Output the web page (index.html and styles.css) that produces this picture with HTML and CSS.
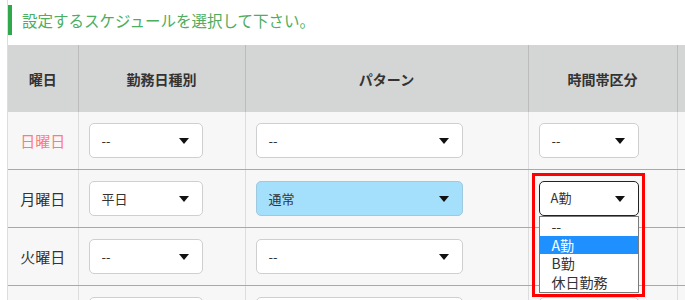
FILE: index.html
```html
<!DOCTYPE html>
<html lang="ja">
<head>
    <meta charset="UTF-8">
    <title>スケジュール設定</title>
    <link rel="stylesheet" href="styles.css">
</head>
<body>
<div class="page">
    <h2 class="title">設定するスケジュールを選択して下さい。</h2>
    <table class="schedule">
        <colgroup>
            <col class="c_day">
            <col class="c_kind">
            <col class="c_pattern">
            <col class="c_time">
            <col class="c_rest">
        </colgroup>
        <thead>
        <tr>
            <th>曜日</th>
            <th>勤務日種別</th>
            <th>パターン</th>
            <th>時間帯区分</th>
            <th></th>
        </tr>
        </thead>
        <tbody>
        <tr>
            <td class="day sunday">日曜日</td>
            <td><div class="select kind">--<span class="arrow"></span></div></td>
            <td><div class="select pattern">--<span class="arrow"></span></div></td>
            <td><div class="select time">--<span class="arrow"></span></div></td>
            <td></td>
        </tr>
        <tr>
            <td class="day">月曜日</td>
            <td><div class="select kind">平日<span class="arrow"></span></div></td>
            <td><div class="select pattern filled">通常<span class="arrow"></span></div></td>
            <td>
                <div class="picker">
                    <div class="select time open">A勤<span class="arrow"></span></div>
                    <ul class="options">
                        <li>--</li>
                        <li class="hover">A勤</li>
                        <li>B勤</li>
                        <li>休日勤務</li>
                    </ul>
                    <div class="mark"></div>
                </div>
            </td>
            <td></td>
        </tr>
        <tr>
            <td class="day">火曜日</td>
            <td><div class="select kind">--<span class="arrow"></span></div></td>
            <td><div class="select pattern">--<span class="arrow"></span></div></td>
            <td><div class="select time">--<span class="arrow"></span></div></td>
            <td></td>
        </tr>
        <tr>
            <td class="day">水曜日</td>
            <td><div class="select kind">--<span class="arrow"></span></div></td>
            <td><div class="select pattern">--<span class="arrow"></span></div></td>
            <td><div class="select time">--<span class="arrow"></span></div></td>
            <td></td>
        </tr>
        </tbody>
    </table>
</div>
</body>
</html>
```
FILE: styles.css
```css
body{
    margin: 0;
    background: #ffffff;
    font-family: "Noto Sans CJK JP", "Noto Sans", sans-serif;
    color: #333333;
    overflow: hidden;
}
.page{
    margin-left: 7px;
    border-left: 1px solid #dddddd;
    padding-top: 5px;
    height: 300px;
}
.title{
    margin: 0 0 10px 0;
    height: 30px;
    border-left: 4px solid #2ea84a;
    padding-left: 10px;
    font-size: 15.5px;
    font-weight: normal;
    line-height: 30px;
    color: #4cae5e;
}
.schedule{
    border-collapse: collapse;
    table-layout: fixed;
    width: 760px;
}
.c_day{ width: 70px; }
.c_kind{ width: 167px; }
.c_pattern{ width: 283px; }
.c_time{ width: 149px; }
.c_rest{ width: 91px; }

.schedule th{
    height: 67px;
    padding: 0;
    background: #d4d5d5;
    border-left: 1px solid #bcbcbc;
    font-size: 14px;
    font-weight: bold;
    color: #333333;
    text-align: center;
}
.schedule th:first-child{ border-left: 0; }
.schedule td{
    height: 57px;
    padding: 0 0 0 10px;
    background: #f7f7f7;
    border-left: 1px solid #dddddd;
    border-bottom: 1px solid #a9a9a9;
    vertical-align: middle;
}
.schedule td:first-child{ border-left: 0; }
.day{
    font-size: 15px;
    text-align: center;
    padding: 0 !important;
}
.sunday{ color: #ff7b7b; }

.select{
    position: relative;
    box-sizing: border-box;
    height: 35px;
    padding-left: 12px;
    background: #ffffff;
    border: 1px solid #cfcfcf;
    border-radius: 5px;
    font-size: 13px;
    line-height: 33px;
    color: #333333;
}
.kind{ width: 114px; }
.pattern{ width: 207px; }
.time{ width: 100px; }
.filled{
    background: #a4dffb;
    border-color: #9fc9de;
}
.arrow{
    position: absolute;
    right: 13px;
    top: 14px;
    border-left: 5px solid transparent;
    border-right: 5px solid transparent;
    border-top: 6px solid #111111;
}
.picker{
    position: relative;
    width: 100px;
}
.open{
    border: 1.5px solid #222222;
    line-height: 32px;
    padding-left: 11px;
}
.options{
    position: absolute;
    left: 0;
    top: 35px;
    box-sizing: border-box;
    width: 100px;
    margin: 0;
    padding: 0;
    list-style: none;
    background: #ffffff;
    border: 1px solid #7a7a7a;
    z-index: 2;
}
.options li{
    height: 18.7px;
    line-height: 18px;
    padding-left: 12px;
    font-size: 14px;
    color: #333333;
}
.options .hover{
    background: #1e90ff;
    color: #ffffff;
}
.mark{
    position: absolute;
    left: -7px;
    top: -8px;
    width: 113px;
    height: 124px;
    box-sizing: border-box;
    border: 3px solid #ff0000;
    z-index: 3;
}
```
